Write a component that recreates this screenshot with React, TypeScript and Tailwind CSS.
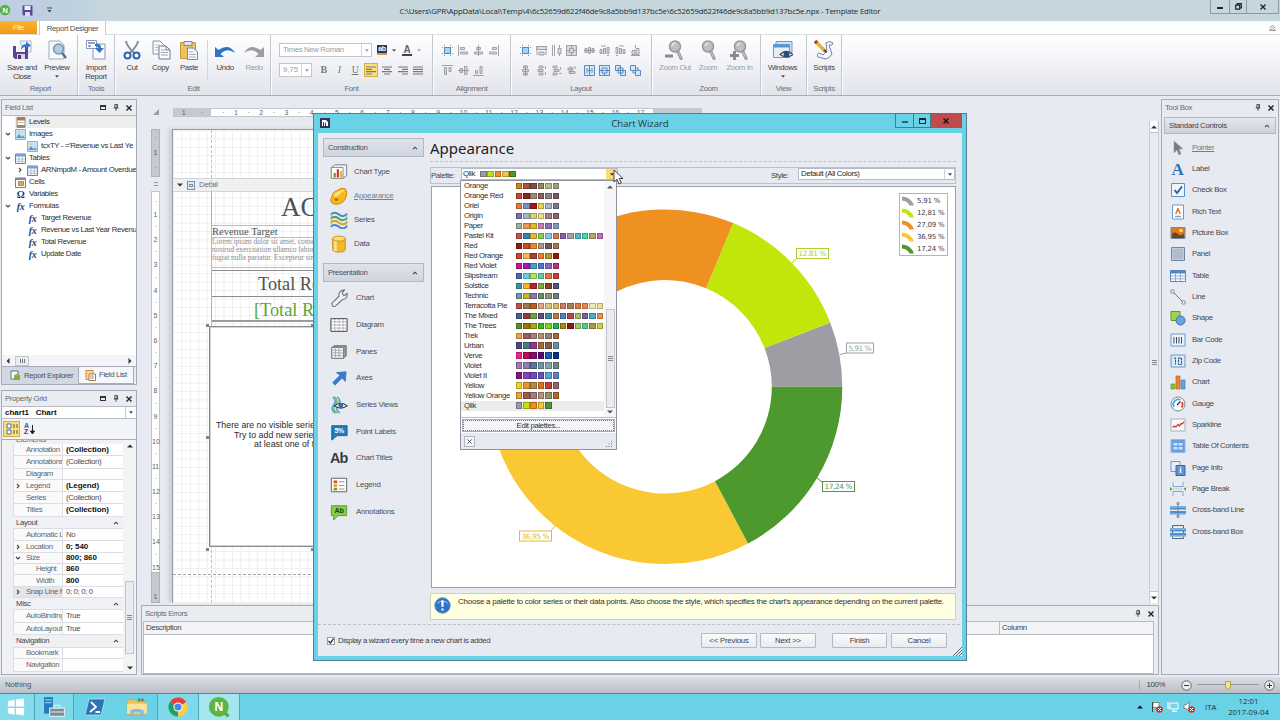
import type { ReactNode } from "react";

interface PaletteRow {
  name: string;
  colors: string[];
}

interface GridRow {
  name: string;
  value?: string;
  bold?: boolean;
  header?: boolean;
  chevron?: "right" | "down";
  indent?: boolean;
  selected?: boolean;
  height: string;
}

const palettes: PaletteRow[] = [
  { name: "Orange", colors: ["#d2821e", "#b5512f", "#7d4f4a", "#94855a", "#b7bb7c", "#95a088"] },
  { name: "Orange Red", colors: ["#cf4527", "#8f2225", "#a08a76", "#8c5f57", "#8b8489", "#7b5c60"] },
  { name: "Oriel", colors: ["#e87b3c", "#7391cd", "#a31515", "#ecd04c", "#aab3cd", "#787c8a"] },
  { name: "Origin", colors: ["#6f78a6", "#9fb6cd", "#d0d978", "#f2dc86", "#a8807f", "#84676a"] },
  { name: "Paper", colors: ["#9db095", "#e79c50", "#e3b82b", "#c77fae", "#8c6fc0", "#7f9bb8"] },
  {
    name: "Pastel Kit",
    colors: ["#ca5252", "#3784bc", "#e3b93c", "#87cf5e", "#85c8ee", "#d67b4f", "#8560b3", "#a4a5a9", "#55b7d3", "#3fdcac", "#b5a676", "#c46db9"],
  },
  { name: "Red", colors: ["#921a11", "#c74a24", "#ec882f", "#a99786", "#74595b", "#a3774f"] },
  { name: "Red Orange", colors: ["#d2432c", "#f2bb55", "#a2442d", "#ea7d3b", "#b39b20", "#9c160b"] },
  { name: "Red Violet", colors: ["#cc1690", "#ae14c1", "#45a3c1", "#4f77da", "#8366c9", "#b93574"] },
  { name: "Slipstream", colors: ["#4e65b8", "#67cde9", "#a5ee57", "#62cbab", "#ea7537", "#cf3b38"] },
  { name: "Solstice", colors: ["#4192a1", "#f4b817", "#b8212e", "#80a743", "#8b4513", "#485585"] },
  { name: "Technic", colors: ["#689dab", "#c8b530", "#8879a6", "#6f8a6d", "#8f9474", "#777a85"] },
  {
    name: "Terracotta Pie",
    colors: ["#c54f40", "#a27b4b", "#b5651b", "#e2a28d", "#cfc886", "#e2b95d", "#ce7b6a", "#ac7d53", "#d98042", "#ec8450", "#ecebb4", "#f6dc9e"],
  },
  {
    name: "The Mixed",
    colors: ["#3e6796", "#943a42", "#799c49", "#604c82", "#3a8ca4", "#bd7542", "#5182bd", "#b34a51", "#9fc168", "#7e619f", "#4eafc0", "#ee9150"],
  },
  {
    name: "The Trees",
    colors: ["#549228", "#a2700d", "#a6ad11", "#3eb420", "#74da10", "#19b457", "#a88b14", "#8b1c0b", "#98cc67", "#57cf8c", "#a99c40", "#cfd142"],
  },
  { name: "Trek", colors: ["#eaa43d", "#9f605b", "#a77d80", "#b68c72", "#91866a", "#a56b33"] },
  { name: "Urban", colors: ["#4f4c83", "#438080", "#96378f", "#b06239", "#8a5b42", "#6590a6"] },
  { name: "Verve", colors: ["#f5208b", "#c90459", "#850c76", "#5a0772", "#135bb9", "#073184"] },
  { name: "Violet", colors: ["#a976b5", "#8a81ba", "#61749b", "#7097a8", "#7fa7aa", "#718485"] },
  { name: "Violet II", colors: ["#85157b", "#8f3fbc", "#704bc0", "#6554b1", "#56a6d9", "#6181c6"] },
  { name: "Yellow", colors: ["#f6d21f", "#e99528", "#b7884c", "#db7121", "#d2382b", "#8b666b"] },
  { name: "Yellow Orange", colors: ["#e8a23a", "#a15b49", "#a67a7a", "#ba9078", "#959070", "#b36b2a"] },
  { name: "Qlik", colors: ["#9b9ca1", "#c1e40b", "#ed8f25", "#f6c640", "#4e962e"] },
];

const gridRows: GridRow[] = [
  { name: "Annotation", value: "(Collection)", bold: true, height: "h-3" },
  { name: "Annotations", value: "(Collection)", height: "h-[13px]" },
  { name: "Diagram", value: "", height: "h-[11px]" },
  { name: "Legend", value: "(Legend)", bold: true, chevron: "right", height: "h-3" },
  { name: "Series", value: "(Collection)", height: "h-3" },
  { name: "Titles", value: "(Collection)", bold: true, height: "h-[13px]" },
  { name: "Layout", header: true, height: "h-3" },
  { name: "Automatic L", value: "No", height: "h-3" },
  { name: "Location", value: "0; 540", bold: true, chevron: "right", height: "h-3" },
  { name: "Size", value: "800; 860", bold: true, chevron: "down", height: "h-[11px]" },
  { name: "Height", value: "860", bold: true, indent: true, height: "h-[11px]" },
  { name: "Width", value: "800", bold: true, indent: true, height: "h-3" },
  { name: "Snap Line M", value: "0; 0; 0; 0", chevron: "right", selected: true, height: "h-[11px]" },
  { name: "Misc", header: true, height: "h-3" },
  { name: "AutoBinding", value: "True", height: "h-[13px]" },
  { name: "AutoLayout", value: "True", height: "h-3" },
  { name: "Navigation", header: true, height: "h-[13px]" },
  { name: "Bookmark", value: "", height: "h-[11px]" },
  { name: "Navigation", value: "", height: "h-[13px]" },
];

const slices = [
  { label: "5,91 %", value: 5.91, color: "#9d9ea3" },
  { label: "12,81 %", value: 12.81, color: "#c1e60a" },
  { label: "27,09 %", value: 27.09, color: "#ee9121" },
  { label: "36,95 %", value: 36.95, color: "#fac832" },
  { label: "17,24 %", value: 17.24, color: "#4e992e" },
];

const Svg = ({ size, children, box = 20 }: { size: number; children: ReactNode; box?: number }) => (
  <svg width={size} height={size} viewBox={`0 0 ${box} ${box}`} className="shrink-0" fill="none">
    {children}
  </svg>
);

const Chevron = ({ dir }: { dir: "up" | "down" | "right" }) => (
  <svg width="6" height="6" viewBox="0 0 6 6" fill="none" stroke="#444" strokeWidth="1.1" className="shrink-0">
    {dir === "up" && <path d="M1 4.2 3 2.2 5 4.2" />}
    {dir === "down" && <path d="M1 2 3 4 5 2" />}
    {dir === "right" && <path d="M2 1 4 3 2 5" />}
  </svg>
);

const Arrow = ({ dir, color = "#333" }: { dir: "up" | "down" | "left" | "right"; color?: string }) => (
  <svg width="6" height="6" viewBox="0 0 6 6" fill={color} className="shrink-0">
    {dir === "up" && <path d="M0 4.5 3 1.5 6 4.5z" />}
    {dir === "down" && <path d="M0 1.5 3 4.5 6 1.5z" />}
    {dir === "left" && <path d="M4.5 0 1.5 3 4.5 6z" />}
    {dir === "right" && <path d="M1.5 0 4.5 3 1.5 6z" />}
  </svg>
);

const SmallArrow = ({ color }: { color: string }) => (
  <svg width="4" height="3" viewBox="0 0 4 3" fill={color} className="shrink-0">
    <path d="M0 .3h4L2 2.700z" />
  </svg>
);

const CloseX = ({ color = "#222" }: { color?: string }) => (
  <svg width="6" height="6" viewBox="0 0 6 6" stroke={color} strokeWidth="1.4" className="shrink-0">
    <path d="M.5.5 5.5 5.5M5.5.5.5 5.5" />
  </svg>
);

const Pin = () => (
  <svg width="6" height="7" viewBox="0 0 6 7" fill="none" stroke="#444" strokeWidth=".9">
    <path d="M1.8.5h2.6v3.2H1.8zM.7 4h4.6M3 4v2.8M4 .5v3.2" />
  </svg>
);

const PanelTitle = ({ title, box }: { title: string; box?: boolean }) => (
  <div className="flex h-[15px] shrink-0 items-center pl-[3px] pr-1 text-[#666b77]">
    <span className="grow">{title}</span>
    {box && <span className="mr-[7px] h-[5px] w-[6px] border border-t-2 border-[#333]" />}
    <span className="mr-[7px]"><Pin /></span>
    <CloseX />
  </div>
);

/* Ribbon */

const Floppy = () => (
  <>
    <path d="M8 1h11v11h-7z" fill="#f5f8fc" stroke="#a9b6c9" />
    <path d="M1 6h15v13H3l-2-2z" fill="#5a4495" />
    <path d="M4 6h9v6H4z" fill="#f3f1f9" />
    <path d="M5 14h8v5H5z" fill="#d9d4ea" />
    <path d="M6 15h3v4H6z" fill="#443175" />
    <path d="M9 10q0-6 5-6V1.500l5 4L14 9V6.700q-3 0-5 3.300z" fill="#3b76c8" />
  </>
);

const Pages = () => (
  <>
    <path d="M2 1h7l4 4v9H2z" fill="#f8fafd" stroke="#8391a8" />
    <path d="M4 5h5M4 7.500h5M4 10h5" stroke="#b5bdcb" />
    <path d="M8 6h7l4 4v9H8z" fill="#fafcff" stroke="#6e7d96" />
    <path d="M15 6v4h4" stroke="#6e7d96" />
    <path d="M10 10h4M10 12.500h7M10 15h7" stroke="#9aa6b9" />
  </>
);

const Lens = () => (
  <>
    <circle cx="10" cy="6.500" r="5.500" fill="#bfc0c2" stroke="#98999b" strokeWidth="1.500" />
    <path d="M7 6q1-3 3.500-3" stroke="#e5e6e7" strokeWidth="1.300" />
    <path d="m13 12 3 6.300" stroke="#97989b" strokeWidth="3.200" strokeLinecap="round" />
    <path d="m13 12 3 6" stroke="#c5c6c8" strokeWidth="1.200" />
  </>
);

const BigButton = ({ icon, label, second, width, muted, arrow }: {
  icon: ReactNode; label: string; second?: string; width: string; muted?: boolean; arrow?: boolean;
}) => (
  <div className={`flex flex-col items-center whitespace-nowrap ${width} ${muted ? "text-[#9a9da4]" : "text-[#3f4148]"}`}>
    <div className="h-[22px]"><Svg size={20}>{icon}</Svg></div>
    <span className="mt-px h-[9px] leading-[9px]">{label}</span>
    {second && <span className="leading-[9px]">{second}</span>}
    {arrow && <span className="mt-[3px]"><SmallArrow color="#555" /></span>}
  </div>
);

const Group = ({ label, width, children }: { label: string; width: string; children: ReactNode }) => (
  <div className={`flex shrink-0 flex-col border-r border-[#c3c6d0] shadow-[1px_0_0_#fdfdfe] ${width}`}>
    <div className="flex h-[49px] pt-[5px]">{children}</div>
    <div className="text-center leading-[10px] text-[#686c77]">{label}</div>
  </div>
);

const AlignLines = ({ kind }: { kind: "left" | "center" | "right" | "full" }) => (
  <svg width="10" height="9" viewBox="0 0 10 9" stroke="#77797d" strokeWidth="1.200">
    {kind === "left" && <path d="M0 1h10M0 3.300h6M0 5.600h10M0 8h6" />}
    {kind === "center" && <path d="M0 1h10M2 3.300h6M0 5.600h10M2 8h6" />}
    {kind === "right" && <path d="M0 1h10M4 3.300h6M0 5.600h10M4 8h6" />}
    {kind === "full" && <path d="M0 1h10M0 3.300h10M0 5.600h10M0 8h10" />}
  </svg>
);

// small shapes used by the Alignment and Layout groups
const small: Record<string, ReactNode> = {
  grid: (
    <g>
      <path d="M2.500 0v11M8.500 0v11M0 2.500h11M0 8.500h11" stroke="#7b8794" strokeDasharray="1 1" />
      <path d="M2.500 2.500h6v6h-6z" fill="#a9d2f2" stroke="#3e83bf" />
    </g>
  ),
  left: <path d="M.5 0v11M2.500 2.500h4v2h-4zM2.500 7h7v2h-7z" />,
  centerV: <path d="M5.500 0v11M3.500 2.500h4v2h-4zM1.500 7h8v2h-8z" />,
  right: <path d="M10.500 0v11M4.500 2.500h4v2h-4zM1.500 7h7v2h-7z" />,
  top: <path d="M0 .5h11M2.500 2.500h2v7h-2zM7 2.500h2v4H7z" />,
  middle: <path d="M0 5.500h11M2 3.500h2.500v4H2zM6.500 1.500h2.500v8H6.500z" />,
  bottom: <path d="M0 10.500h11M2.500 5.500h2v3h-2zM7 1.500h2v7H7z" />,
  width: <path d="M.5 1.500h10v3H.500zM3 7h5v3H3zM1 4v6M10 4v6" />,
  height: <path d="M1.500 0v11M3.500 0v11M7 3.500h3v5H7zM8.500 0v3M8.500 8.500V11" />,
  both: <path d="M.5.5h10v10H.500zM3.500 3.500h4v4h-4zM5.500 0v3M5.500 8v3M0 5.500h3M8 5.500h3" />,
  hEq: <path d="M1 3.500h2v4H1zM4.500 2.500h2v6h-2zM8 3.500h2v4H8zM0 5.500h11" />,
  hInc: <path d="M1 4.500h2v4H1zM4.500 3.500h2v5h-2zM8 2.500h2v6H8zM2 1h5M8 10.500h2" />,
  hDec: <path d="M1 2.500h2v6H1zM4.500 3.500h2v5h-2zM8 4.500h2v4H8zM4 1h5M1 10.500h2" />,
  hDel: <path d="M2 5.500h3v4H2zM6 3.500h3v6H6zM5.500 0v3M1 10.500h9" />,
  vEq: <path d="M3.500 1h4v2h-4zM2.500 4.500h6v2h-6zM3.500 8h4v2h-4zM5.500 0v11" />,
  vInc: <path d="M3 1h4v2H3zM2 4.500h5v2H2zM3 8h4v2H3zM9.500 1v3M9.500 7v3" />,
  vDec: <path d="M2 1h4v2H2zM3 4.500h5v2H3zM2 8h4v2H2zM9.500 2v3M8 8.500h3" />,
  vDel: <path d="M2 3h5v2H2zM3 6.500h6v2H3zM5 1v8M9 1v3" />,
};

const blueSmall: Record<string, ReactNode> = {
  centerH: <path d="M.5.500h10v10H.500zM3 3v5M8 3v5M4 5.500h3M5.500 1v9" />,
  centerW: <path d="M.5.500h10v10H.500zM3 3h5v5H3zM1 5.500h9M5.500 8v2" />,
  front: <path d="M.5.500h5v5h-5zM5.500 5.500h5v5h-5zM3 3h5v5H3z" />,
  back: <path d="M.5.500h5v5h-5zM5.500 5.500h5v5h-5zM3 6v2h2M6 3h2v2" />,
};

const SmallIcon = ({ name }: { name: string }) => (
  <div className="flex w-[15.4px] justify-center">
    <svg width="11" height="11" viewBox="0 0 11 11" fill={blueSmall[name] ? "#d6e9fa" : "#d9dadb"} stroke={blueSmall[name] ? "#4c7fb5" : "#97999d"} strokeWidth=".9">
      {small[name] ?? blueSmall[name]}
    </svg>
  </div>
);

const Ribbon = () => (
  <div className="flex h-[61px] shrink-0 border-b border-[#a9adbc] bg-linear-to-b from-white via-[#f1f2f6] to-[#e1e4eb]">
    <Group label="Report" width="w-[78px] pl-1">
      <BigButton width="w-9" label="Save and" second="Close" icon={<Floppy />} />
      <BigButton width="w-[34px]" label="Preview" arrow icon={
        <>
          <path d="M2 1h11l4 4v14H2z" fill="#f7f9fc" stroke="#a1abba" />
          <circle cx="11.500" cy="9" r="5" fill="#a9cdea" stroke="#7f93a8" strokeWidth="1.500" />
          <path d="m15 13 4 5" stroke="#596a7d" strokeWidth="2.200" />
        </>
      } />
    </Group>
    <Group label="Tools" width="w-[37px]">
      <BigButton width="w-[36px]" label="Import" second="Report" icon={
        <>
          <path d="M7 4h12v15H7z" fill="#f8fafd" stroke="#8b9ab1" />
          <path d="M.5.500h10v8H.500z" fill="#fff" stroke="#8799b6" />
          <path d="M2 3h7M2 6h3" stroke="#648ec8" strokeWidth="1.500" />
          <path d="M9 4q6-1 6 4h3l-4.500 5L9 8h3q0-2-3-2z" fill="#3673c4" />
        </>
      } />
    </Group>
    <Group label="Edit" width="w-[156px] pl-[2px]">
      <BigButton width="w-[30px]" label="Cut" icon={
        <>
          <path d="M4 1q0 4 8 12M16 1q0 4-8 12" stroke="#8390a1" strokeWidth="2" />
          <circle cx="5.500" cy="15.500" r="3" stroke="#2f65b4" strokeWidth="2" />
          <circle cx="14.500" cy="15.500" r="3" stroke="#2f65b4" strokeWidth="2" />
        </>
      } />
      <BigButton width="w-[27px]" label="Copy" icon={<Pages />} />
      <BigButton width="w-[30px]" label="Paste" icon={
        <>
          <path d="M1.500 2.500h15v16h-15z" fill="#edc263" stroke="#c7973c" />
          <path d="M5 1.500h8v4H5z" fill="#dfe6ee" stroke="#7b8898" />
          <path d="M8.500 8h6l4 4v7.500h-10z" fill="#f8fafd" stroke="#7886a0" />
          <path d="M10 12h4M10 14.500h7M10 17h7" stroke="#9faec2" />
        </>
      } />
      <span className="ml-[3px] h-10 w-px bg-[#d4d6dd]" />
      <BigButton width="ml-px w-[32px]" label="Undo" icon={
        <path d="M0 7v10h9l-3.500-3Q12 7 20 13 14 3 3.500 10z" fill="#2e71c6" />
      } />
      <BigButton width="w-[26px]" label="Redo" muted icon={
        <path d="M20 7v10h-9l3.500-3Q8 7 0 13 6 3 16.500 10z" fill="#9b9da1" />
      } />
    </Group>
    <Group label="Font" width="w-[162px]">
      <div className="flex flex-col gap-[6px] pt-[3px] pl-2 text-[#9b9da3]">
        <div className="flex h-[14px] items-center">
          <div className="flex h-full w-[93px] items-center border border-[#c3c5cd] bg-white pl-[3px]">
            <span className="grow">Times New Roman</span>
            <span className="flex h-full w-[10px] items-center justify-center border-l border-[#d5d7dd]"><SmallArrow color="#999" /></span>
          </div>
          <span className="ml-[5px] flex h-[10px] w-[10px] items-center justify-center border-b-2 border-[#d9993f] bg-[#2b3859] text-[7px] font-bold text-white">ab</span>
          <span className="ml-[5px]"><SmallArrow color="#555" /></span>
          <span className="ml-[6px] h-[11px] w-[10px] border-b-2 border-[#444] text-center text-[10px] leading-[9px] font-bold text-[#666]">A</span>
          <span className="ml-[5px]"><SmallArrow color="#aaa" /></span>
        </div>
        <div className="flex h-[14px] items-center">
          <div className="flex h-full w-[33px] items-center border border-[#c3c5cd] bg-white pl-[3px]">
            <span className="grow tracking-normal">9,75</span>
            <span className="flex h-full w-[10px] items-center justify-center border-l border-[#d5d7dd]"><SmallArrow color="#999" /></span>
          </div>
          <div className="flex w-[52px] justify-around pl-[3px] font-['Liberation_Serif',serif] text-[10px] text-[#77797e]">
            <b>B</b><i>I</i><u>U</u>
          </div>
          <div className="flex h-[14px] w-[14px] items-center justify-center border border-[#d9b13c] bg-[#fbdf7e]"><AlignLines kind="left" /></div>
          <div className="ml-[4px] flex gap-[5.5px]"><AlignLines kind="center" /><AlignLines kind="right" /><AlignLines kind="full" /></div>
        </div>
      </div>
    </Group>
    <Group label="Alignment" width="w-[78px]">
      <div className="flex flex-col gap-[9px] pt-[5px] pl-[7px]">
        <div className="flex">{["grid", "left", "centerV", "right"].map((n) => <SmallIcon key={n} name={n} />)}</div>
        <div className="flex">{["top", "middle", "bottom"].map((n) => <SmallIcon key={n} name={n} />)}</div>
      </div>
    </Group>
    <Group label="Layout" width="w-[141px]">
      <div className="flex flex-col gap-[9px] pt-[5px] pl-[7px]">
        <div className="flex">
          {["grid", "width", "height", "both"].map((n) => <SmallIcon key={n} name={n} />)}
          <span className="w-[2px]" />
          {["hEq", "hInc", "hDec", "hDel"].map((n) => <SmallIcon key={n} name={n} />)}
        </div>
        <div className="flex">
          {["vEq", "vInc", "vDec", "vDel"].map((n) => <SmallIcon key={n} name={n} />)}
          <span className="w-[2px]" />
          {["centerH", "centerW", "front", "back"].map((n) => <SmallIcon key={n} name={n} />)}
        </div>
      </div>
    </Group>
    <Group label="Zoom" width="w-[109px] pl-[5px]">
      <BigButton width="w-9" label="Zoom Out" muted icon={<><Lens /><path d="M0 16h8" stroke="#8a8c90" strokeWidth="3" /></>} />
      <BigButton width="w-[30px]" label="Zoom" muted icon={<Lens />} />
      <BigButton width="w-[33px]" label="Zoom In" muted icon={<><Lens /><path d="M0 15.500h9M4.500 11v9" stroke="#8a8c90" strokeWidth="3" /></>} />
    </Group>
    <Group label="View" width="w-[46px]">
      <BigButton width="w-[43px]" label="Windows" arrow icon={
        <>
          <path d="M3 1.500h16v11H3z" fill="#cfe2f6" stroke="#6b9bcd" />
          <path d="M.5 4.500h16v13H.500z" fill="#e4effa" stroke="#6b9bcd" />
          <path d="M.5 4.500h16v3H.500z" fill="#5b97d5" />
          <path d="M7 14.500q6-6 13 0-6 5-13 0z" fill="#fff" stroke="#4c4c50" strokeWidth="1.200" />
          <circle cx="13.500" cy="14.300" r="3" fill="#244a86" />
        </>
      } />
    </Group>
    <Group label="Scripts" width="w-[35px]">
      <BigButton width="w-[34px]" label="Scripts" icon={
        <>
          <path d="M12 3q3-3 7 0 0 3-4 2l3 9q-2 4-6 5l-8-2q-2-3 1-4l4 2 4-4z" fill="#f6f8fb" stroke="#76839a" />
          <path d="m2 2 9 9" stroke="#e0b33e" strokeWidth="3.500" />
          <path d="m1 1 2 2" stroke="#c8362b" strokeWidth="3.500" />
          <path d="m10 10 2.500 2.500" stroke="#464646" strokeWidth="2" />
        </>
      } />
    </Group>
  </div>
);

/* Left dock */

const TreeIcon = ({ kind }: { kind: string }) => {
  if (kind === "fx") {
    return <span className="w-[11px] shrink-0 text-center font-['Liberation_Serif',serif] text-[10px] leading-[11px] font-bold italic text-[#27407c]">fx</span>;
  }
  if (kind === "omega") {
    return <span className="w-[11px] shrink-0 text-center font-['Liberation_Serif',serif] text-[10px] leading-[11px] font-bold text-[#1d3778]">Ω</span>;
  }
  return (
    <Svg size={11} box={11}>
      {kind === "levels" && (
        <>
          <path d="M2 .5h8v10H2z" fill="#fff" stroke="#9c9088" />
          <path d="M2 .5h8v3H2z" fill="#a8775c" />
          <path d="M2 8h8v2.500H2z" fill="#8f8a8a" />
          <path d="M3 5.500h6" stroke="#d7b98c" />
        </>
      )}
      {kind === "image" && (
        <>
          <path d="M.5.500h10v10H.500z" fill="#c6e2f7" stroke="#87b1d6" />
          <path d="m1 9 3-4 2.500 3L8 6.500l2 2.500z" fill="#5c9acb" />
          <circle cx="4" cy="3.500" r="1.200" fill="#f3c873" />
        </>
      )}
      {kind === "table" && (
        <>
          <path d="M.5 1h10v9.500H.500z" fill="#fff" stroke="#6580ac" />
          <path d="M.5 1h10v2.500H.500z" fill="#7b9ed3" />
          <path d="M1 6h9M1 8.300h9M4 3v7M7.300 3v7" stroke="#93a8c9" strokeWidth=".7" />
        </>
      )}
      {kind === "cells" && (
        <>
          <path d="M.5 1h10v9.500H.500z" fill="#fff" stroke="#7e7e86" />
          <path d="M.5 1h10v2H.500z" fill="#808796" />
          <path d="M3.500 4.500h5v4h-5z" fill="#dfa84c" stroke="#8b6c4a" strokeWidth=".7" />
        </>
      )}
    </Svg>
  );
};

const tree = [
  { icon: "levels", label: "Levels", selected: true },
  { icon: "image", label: "Images", chevron: "down" },
  { icon: "image", label: "tcxTY - ='Revenue vs Last Ye", child: true },
  { icon: "table", label: "Tables", chevron: "down" },
  { icon: "table", label: "ARNmpdM - Amount Overdue", child: true, chevron: "right" },
  { icon: "cells", label: "Cells" },
  { icon: "omega", label: "Variables" },
  { icon: "fx", label: "Formulas", chevron: "down" },
  { icon: "fx", label: "Target Revenue", child: true },
  { icon: "fx", label: "Revenue vs Last Year Revenu", child: true },
  { icon: "fx", label: "Total Revenue", child: true },
  { icon: "fx", label: "Update Date", child: true },
];

const FieldList = () => (
  <div className="flex h-[286px] w-[136px] flex-col border border-[#a5acba] bg-[#e9ecf1]">
    <PanelTitle title="Field List" box />
    <div className="flex grow flex-col overflow-hidden border-t border-[#b6bbc6] bg-white text-[#2d2f33]">
      {tree.map((t) => (
        <div key={t.label} className={`flex h-3 shrink-0 items-center whitespace-nowrap ${t.child ? "pl-[15px]" : "pl-[3px]"}`}>
          <span className="w-[10px] shrink-0">{t.chevron && <Chevron dir={t.chevron as "down" | "right"} />}</span>
          <span className={`flex h-full grow items-center gap-[3px] ${t.selected ? "bg-[#eeeeef]" : ""}`}>
            <TreeIcon kind={t.icon} />
            {t.label}
          </span>
        </div>
      ))}
      <div className="mt-auto flex h-[11px] items-center gap-1 bg-[#f5f5f7] px-[3px]">
        <Arrow dir="left" />
        <span className="flex h-[10px] w-[14px] items-center justify-center gap-px border border-[#c6c8d0] bg-[#ebecf1]">
          <i className="h-1 w-px bg-[#777]" /><i className="h-1 w-px bg-[#777]" /><i className="h-1 w-px bg-[#777]" />
        </span>
        <span className="grow" />
        <Arrow dir="right" />
      </div>
    </div>
    <div className="flex h-[18px] shrink-0 border-t border-[#a5acba] whitespace-nowrap text-[#4c5059]">
      <div className="flex w-[77px] items-center gap-[3px] border-r border-[#a5acba] bg-[#d2d8e2] pl-2">
        <Svg size={11} box={11}>
          <path d="M1 1h7v8H1z" fill="#fff" stroke="#55749c" />
          <path d="M4 5h6v5H4z" fill="#7fb143" />
          <path d="M5.500 3.500h2v2h-2z" fill="#e1a637" />
        </Svg>
        Report Explorer
      </div>
      <div className="flex w-[55px] items-center gap-[3px] border-r border-b border-[#a5acba] bg-[#f5f7fa] pl-[6px]">
        <Svg size={11} box={11}>
          <path d="M1 .5h7v9H1z" fill="#f8d98f" stroke="#cc8a3a" />
          <path d="M4 4h6.500v6.500H4z" fill="#fff" stroke="#c17635" />
          <path d="M5 6h4M5 8h4" stroke="#789bc8" />
        </Svg>
        Field List
      </div>
    </div>
  </div>
);

const PropertyGrid = () => (
  <div className="flex h-[285px] w-[136px] flex-col border border-[#a5acba] bg-[#e9ecf1]">
    <PanelTitle title="Property Grid" box />
    <div className="flex h-[13px] shrink-0 items-center border-y border-[#b6bbc6] bg-white pl-[3px] text-[8px] font-bold tracking-normal text-[#111]">
      <span className="grow whitespace-pre">chart1   Chart</span>
      <span className="flex h-full w-[11px] items-center justify-center border-l border-[#c6c9d1]"><SmallArrow color="#444" /></span>
    </div>
    <div className="flex h-5 shrink-0 items-center gap-1 bg-[#f3f4f7] px-px">
      <span className="flex h-4 w-[17px] items-center justify-center border border-[#d7ab3c] bg-[#fbdf7c]">
        <Svg size={12} box={12}>
          <path d="M1 1h4v4H1zM1 7h4v4H1z" fill="#fff" stroke="#4372ae" />
          <path d="M7 2h2M7 4h2M7 8h2M7 10h2M10 2h2M10 4h2M10 8h2M10 10h2" stroke="#5a5a5a" />
        </Svg>
      </span>
      <span className="flex flex-col text-[7px] leading-[6px] font-bold"><i className="not-italic text-[#2c62ac]">A</i><i className="not-italic text-[#a32626]">Z</i></span>
      <svg width="5" height="11" viewBox="0 0 5 11" className="-ml-[3px]"><path d="M2.500 1v8M.5 7l2 3 2-3z" stroke="#222" fill="#222" /></svg>
    </div>
    <div className="flex grow overflow-hidden border-t border-[#a5acba]">
      <div className="flex w-[121px] flex-col bg-[#f0f1f4] pl-[11px] text-[#63666e]">
        <div className="h-1 shrink-0 overflow-hidden pl-[3px] leading-[0px]">Elements</div>
        {gridRows.map((r, i) =>
          r.header ? (
            <div key={i} className={`flex shrink-0 items-center border-b border-[#dcdee4] pl-[3px] pr-[4px] text-[#44474f] ${r.height}`}>
              <span className="grow">{r.name}</span>
              <Chevron dir="up" />
            </div>
          ) : (
            <div key={i} className={`flex shrink-0 border-b border-[#dcdee4] whitespace-nowrap ${r.height} ${r.selected ? "bg-[#e4e5e8]" : "bg-[#fafafb]"}`}>
              <div className="flex w-[50px] items-center overflow-hidden border-x border-[#dcdee4]">
                <span className="w-[12px] shrink-0 pl-px">{r.chevron && <Chevron dir={r.chevron} />}</span>
                <span className={r.indent ? "pl-[10px]" : ""}>{r.name}</span>
              </div>
              <div className={`flex grow items-center bg-white pl-[3px] ${r.bold ? "text-[8px] font-bold tracking-[-0.1px] text-[#111]" : "text-[#4a4c52]"}`}>{r.value}</div>
            </div>
          )
        )}
      </div>
      <div className="flex w-[13px] flex-col items-center bg-[#f3f3f5] py-[3px]">
        <Arrow dir="up" />
        <span className="grow" />
        <span className="mb-[11px] flex h-[73px] w-[9px] flex-col items-center justify-center gap-px border border-[#c2c4cb] bg-[#ececf0]">
          <i className="h-px w-[5px] bg-[#888]" /><i className="h-px w-[5px] bg-[#888]" /><i className="h-px w-[5px] bg-[#888]" />
        </span>
        <Arrow dir="down" />
      </div>
    </div>
  </div>
);

/* Design surface */

const Handle = ({ at }: { at: string }) => <i className={`absolute h-[3px] w-[3px] bg-[#7685a3] ${at}`} />;

const Ruler = () => (
  <div className="flex h-[9px] w-[529px] overflow-hidden border border-[#c2c6ce] bg-white text-center text-[7px] leading-[8px] tracking-normal text-[#5f6268]">
    <div className="flex w-[37px] shrink-0 justify-around bg-[#c4c9d2]"><span>1</span><span>·</span></div>
    <div className="flex shrink-0 pl-[12.2px]">
      {Array.from({ length: 17 }, (_, i) => (
        <span key={i} className="relative w-[25.3px] shrink-0">{i + 1}<i className="absolute top-0 -left-px not-italic">·</i></span>
      ))}
    </div>
    <div className="grow bg-[#c4c9d2]" />
  </div>
);

const VRuler = () => (
  <div className="flex w-[9px] flex-col items-center text-[7px] leading-[8px] tracking-normal text-[#5f6268]">
    <div className="flex h-12 w-full shrink-0 flex-col items-center justify-around border border-[#adb3bf] bg-[#c4c9d2] text-center"><span>·</span><span>1</span><span>·</span></div>
    <span className="my-[5px] h-1 w-1 shrink-0 border-y border-[#999]" />
    <div className="h-[381px] w-full shrink-0 border border-b-0 border-[#c2c6ce] bg-white pt-[10px] text-center">
      {Array.from({ length: 15 }, (_, i) => (
        <div key={i} className="relative h-[25.2px] pt-[9px]"><i className="absolute top-[-4px] left-[3px] not-italic">·</i>{i + 1}</div>
      ))}
    </div>
    <div className="w-full grow border border-[#adb3bf] bg-[#c4c9d2] pt-5 text-center">1</div>
  </div>
);

const Surface = () => (
  <div className="flex h-[507px] shrink-0 bg-[#e7eaf0]">
    <div className="relative flex grow flex-col overflow-hidden">
      <div className="mt-[12px] flex pl-[12px]">
        <svg width="8" height="8" viewBox="0 0 8 8" className="mr-[13px]"><path d="M7 1v6H1z" fill="#999da5" /></svg>
        <Ruler />
      </div>
      <div className="mt-[12px] flex grow pl-[11px]">
        <VRuler />
        <div className="relative ml-[12px] w-[529px] border-t border-l border-[#9a9da5] bg-white bg-[linear-gradient(#eeeeef_1px,transparent_1px),linear-gradient(90deg,#eeeeef_1px,transparent_1px)] bg-[size:8.43px_8.43px] font-['Liberation_Serif',serif] tracking-normal shadow-[-3px_0_4px_#c9ccd3]">
          <div className="mt-[48px] flex h-[14px] items-center gap-1 border-y border-[#d2d3d6] bg-[#f0f0f1] pl-1 font-['Liberation_Sans',sans-serif] tracking-[-0.2px] text-[#6b6e75]">
            <Arrow dir="down" />
            <span className="flex h-[9px] w-[8px] items-center justify-center border border-[#7492b2] bg-[#dce8f3]"><i className="h-[3px] w-[4px] border border-[#7492b2]" /></span>
            Detail
          </div>
          <i className="absolute top-0 left-[38px] h-full border-l border-dashed border-[#c2c2c4]" />
          <i className="absolute top-[444px] left-0 w-full border-t border-dashed border-[#a6a6a8]" />
          <div className="absolute top-[62px] left-[38px] h-[134px] w-[453px] border-l border-[#b5b5b8] text-[#505154]">
            <div className="h-[34px] border-b border-[#bdbdc0] pl-[69px] text-[27px] leading-[31px]">ACME</div>
            <div className="h-3 border-b border-[#bdbdc0] text-[10.5px] leading-[12px] whitespace-nowrap">Revenue Target</div>
            <div className="h-[30px] w-[280px] border-b border-[#bdbdc0] text-[7.4px] leading-[8px] whitespace-nowrap text-[#8e8f92]">
              <div>Lorem ipsum dolor sit amet, consectetur adipiscing elit</div>
              <div>nostrud exercitation ullamco laboris nisi ut aliquip ex</div>
              <div>fugiat nulla pariatur. Excepteur sint occaecat cupidatat</div>
            </div>
            <div className="mt-[2px] h-[27px] border-y border-[#8b8b8e] pl-[46px] text-[18.3px] leading-[26px] whitespace-nowrap">Total Revenue</div>
            <div className="h-[25px] border-b-2 border-[#9b9b9e] pl-[42px] text-[18.3px] leading-[26px] whitespace-nowrap text-[#5da53a]">[Total Revenue]</div>
          </div>
          <div className="absolute top-[196px] left-[36px] h-[221px] w-[455px] border border-[#8b8b8f] bg-white pt-[94px] pl-[6px] font-['Liberation_Sans',sans-serif] text-[8.8px] leading-[9.7px] whitespace-nowrap text-[#2a2a2c] shadow-[inset_0_0_0_1px_#d4d4d7]">
            <div>There are no visible series in the chart.</div>
            <div className="pl-[18px]">Try to add new series or make</div>
            <div className="pl-[38px]">at least one of them visible.</div>
          </div>
          <Handle at="top-[194px] left-[33px]" />
          <Handle at="top-[194px] left-[138px]" />
          <Handle at="top-[306px] left-[33px]" />
          <Handle at="top-[418px] left-[33px]" />
          <Handle at="top-[418px] left-[138px]" />
        </div>
      </div>
    </div>
    <div className="mt-[25px] flex w-[10px] flex-col items-center border-x border-[#c9ccd3] bg-[#f1f2f5]">
      <span className="flex h-[11px] items-center bg-white"><Arrow dir="up" /></span>
      <span className="flex w-full grow flex-col items-center justify-center gap-px border-y border-[#c2c4cb] bg-[#e9ebf0]">
        <i className="h-px w-[5px] bg-[#888]" /><i className="h-px w-[5px] bg-[#888]" /><i className="h-px w-[5px] bg-[#888]" />
      </span>
      <span className="flex h-[11px] items-center bg-white"><Arrow dir="down" /></span>
    </div>
  </div>
);

const ScriptErrors = () => (
  <div className="ml-px flex h-[70px] w-[1018px] flex-col border border-[#a5acba] bg-[#e9ecf1]">
    <PanelTitle title="Scripts Errors" />
    <div className="ml-px mr-1 flex h-[14px] shrink-0 items-center border border-[#b6bbc6] bg-[#f1f3f7] text-[#3e4149]">
      <span className="w-[855px] pl-[2px]">Description</span>
      <span className="flex h-full items-center border-l border-[#b6bbc6] pl-[2px]">Column</span>
    </div>
    <div className="mr-1 ml-px grow border-x border-b border-[#b6bbc6] bg-white" />
  </div>
);

/* Toolbox */

const tools: { label: string; icon: ReactNode }[] = [
  { label: "Pointer", icon: <path d="M4 1v12l3-3 2 5 2-1-2-5h4z" fill="#77797c" stroke="#a5a6a8" strokeWidth=".6" /> },
  { label: "Label", icon: <text x="1.500" y="14" fontSize="17" fontWeight="bold" fontFamily="Liberation Serif, serif" fill="#3274b8">A</text> },
  { label: "Check Box", icon: <><path d="M1.500 1.500h13v13h-13z" fill="#eef6fd" stroke="#5d90c3" /><path d="m4.500 8 2.500 3 5-6.500" stroke="#2b5c9c" strokeWidth="1.800" /></> },
  { label: "Rich Text", icon: <><path d="M2.500 1h11v14h-11z" fill="#fff" stroke="#6a9ac8" /><path d="m5 10 2.500-6h1L11 10H9.500L8 6.500 6.500 10z" fill="#d8692d" /><path d="M5 12.500h6" stroke="#8b9cb0" strokeWidth="1.500" /></> },
  { label: "Picture Box", icon: <><path d="M1 2.500h14v11H1z" fill="#d77c20" stroke="#688ab0" /><path d="M2 9q3-3 6 0t6-1v5H2z" fill="#7c3f16" /><circle cx="11" cy="5.500" r="1.800" fill="#f9d860" /></> },
  { label: "Panel", icon: <><path d="M1.500 1.500h13v13h-13z" fill="#c3ced9" stroke="#71869e" /><path d="M3 3h10v10H3z" fill="#aebdcb" /></> },
  { label: "Table", icon: <><path d="M.5 2.500h15v11H.500z" fill="#fff" stroke="#5f87b5" /><path d="M.5 2.500h15v3H.500z" fill="#4e87cb" /><path d="M1 8h14M1 10.800h14M5.500 5v8M10.500 5v8" stroke="#83a3c9" strokeWidth=".9" /></> },
  { label: "Line", icon: <><path d="m3 3 10 10" stroke="#777" /><path d="M1 1h3v3H1zM12 12h3v3h-3z" fill="#fff" stroke="#777" strokeWidth=".8" /></> },
  { label: "Shape", icon: <><path d="M1 1.500h9v9H1z" fill="#9ed54c" stroke="#5d9828" /><circle cx="10.500" cy="10.500" r="4.500" fill="#6ea1da" stroke="#3b6fae" /></> },
  { label: "Bar Code", icon: <><path d="M1 2h14v12H1z" fill="#eaf3fb" stroke="#6b9aca" /><path d="M4 5v6.500M6.500 5v6.500M9 5v6.500M11.500 5v6.500" stroke="#3e4f66" /></> },
  { label: "Zip Code", icon: <><path d="M1 2h14v12H1z" fill="#d8e9f8" stroke="#6b9aca" /><path d="M4 5h1.500v6.500M8.500 5h3v6.500h-3z" stroke="#35577f" strokeDasharray="2.500 .5" /></> },
  { label: "Chart", icon: <><path d="M1 10h4v5H1z" fill="#86c63e" stroke="#4e9122" strokeWidth=".6" /><path d="M6 2h4v13H6z" fill="#ec8333" stroke="#bb571b" strokeWidth=".6" /><path d="M11 6h4v9h-4z" fill="#6aa2e0" stroke="#3a6daa" strokeWidth=".6" /></> },
  { label: "Gauge", icon: <><circle cx="8" cy="8" r="7" fill="#fff" stroke="#7d8590" /><path d="M4 11a5 5 0 0 1 6.500-7" stroke="#45a5e4" strokeWidth="1.800" /><path d="M12 6q1.500 3-.5 5.500" stroke="#d64337" strokeWidth="1.800" /><path d="m7 9 3.500-3.500" stroke="#333" strokeWidth="1.300" /></> },
  { label: "Sparkline", icon: <><path d="M1 2h14v12H1z" fill="#fbfbfc" stroke="#a9aeb6" /><path d="m2.500 10.500 2-1.500 1.500 1L8 7.500 9.500 9 11 6.500l1 .5 2-2" stroke="#c9352f" strokeWidth="1.200" /></> },
  { label: "Table Of Contents", icon: <><path d="M1 1.500h14v13H1z" fill="#6aa0de" stroke="#8fb9e8" /><path d="M3.500 5h4v2.500h-4zM8.500 5h4v2.500h-4zM3.500 9h4v2.500h-4zM8.500 9h4v2.500h-4z" fill="#cfe3f8" /></> },
  { label: "Page Info", icon: <><path d="M1 1.500h9v10H1z" fill="#e8f1fa" stroke="#6d96c4" /><path d="M6 5.500h9v10H6z" fill="#5d94d6" stroke="#3567a5" /><path d="M10.500 8.500V13M10.500 6.500v1" stroke="#fff" strokeWidth="1.500" /></> },
  { label: "Page Break", icon: <><path d="M3 1v4.500h10V1M3 15v-4.500h10V15" fill="#e5eff9" stroke="#84a6ca" /><path d="M3 8h10" stroke="#a8bdd5" strokeDasharray="1.500 1" /><path d="m0 6 2.500 2L0 10zM16 6l-2.500 2 2.500 2z" fill="#52a83b" /></> },
  { label: "Cross-band Line", icon: <><path d="M0 4h16v3.500H0zM0 9h16v3.500H0z" fill="#4c8fd3" /><path d="M0 5h16M0 12h16" stroke="#a8ccef" /><path d="M8 1v14M7 .5h2v2H7zM7 13.500h2v2H7z" stroke="#666" strokeWidth=".6" /></> },
  { label: "Cross-band Box", icon: <><path d="M2.500 1.500h11v13h-11z" stroke="#4f6784" /><path d="M0 4h16v3.500H0zM0 9h16v3.500H0z" fill="#4c8fd3" /><path d="M0 5h16M0 12h16" stroke="#a8ccef" /></> },
];

const ToolBox = () => (
  <div className="mt-[3px] flex h-[576px] w-[118px] flex-col border border-[#a5acba] bg-[#e7eaf0]">
    <PanelTitle title="Tool Box" />
    <div className="mx-[2px] mt-[2px] flex h-[17px] items-center border border-[#b2b8c4] bg-linear-to-b from-[#e3e7ee] to-[#cdd3de] pr-[5px] pl-1 text-[#3f434b]">
      <span className="grow tracking-[-0.3px]">Standard Controls</span>
      <Chevron dir="up" />
    </div>
    <div className="mt-[3px] flex flex-col">
      {tools.map((t) => (
        <div key={t.label} className="flex h-[21.33px] items-center gap-[6px] pl-2 text-[#45494f]">
          <Svg size={16} box={16}>{t.icon}</Svg>
          <span className={t.label === "Pointer" ? "text-[#777a80] underline" : ""}>{t.label}</span>
        </div>
      ))}
    </div>
  </div>
);

/* Chart Wizard */

const CX = 665;
const CY = 386.8;

const point = (deg: number, r: number) => {
  const a = (deg * Math.PI) / 180;
  return `${(CX + r * Math.cos(a)).toFixed(2)} ${(CY - r * Math.sin(a)).toFixed(2)}`;
};

const arcPath = (from: number, to: number) =>
  `M${point(from, 177.3)}A177.3 177.3 0 0 0 ${point(to, 177.3)}L${point(to, 106.8)}A106.8 106.8 0 0 1 ${point(from, 106.8)}z`;

const callouts = [
  { text: "12,81 %", x: 796.5, y: 248.5, w: 32, color: "#b3cc2e", line: "M792 263 797 258" },
  { text: "5,91 %", x: 846.5, y: 343, w: 27, color: "#9d9ea3", line: "M840 354.500 846 353" },
  { text: "17,24 %", x: 822.5, y: 481.5, w: 32, color: "#5c8f4a", line: "M817 478 822 482" },
  { text: "36,95 %", x: 519.5, y: 531, w: 32, color: "#dcbb45", line: "M556 525 551 531" },
];

const Donut = () => {
  let angle = 0;
  return (
    <svg width="522" height="399" viewBox="432 187 522 399" className="tracking-normal">
      {slices.map((s) => {
        const from = angle;
        angle += s.value * 3.6;
        return <path key={s.label} d={arcPath(from, angle)} fill={s.color} />;
      })}
      {callouts.map((c) => (
        <g key={c.text}>
          <path d={c.line} stroke={c.color} />
          <rect x={c.x} y={c.y} width={c.w} height="10" fill="#fff" stroke={c.color} />
          <text x={c.x + 2} y={c.y + 7.8} fontSize="7.3" textLength={c.w - 4} fontFamily="DejaVu Sans, sans-serif" fill={c.color}>{c.text}</text>
        </g>
      ))}
    </svg>
  );
};

const Swatches = ({ colors }: { colors: string[] }) => (
  <span className="flex gap-[0.85px]">
    {colors.map((c, i) => (
      <i key={i} className="h-[6.5px] w-[6.5px] border border-black/25" style={{ backgroundColor: c }} />
    ))}
  </span>
);

const NavHeader = ({ label }: { label: string }) => (
  <div className="flex h-[19px] w-[101px] shrink-0 items-center border border-[#b2b8c4] bg-linear-to-b from-[#dfe3ea] to-[#cfd5df] pr-[5px] pl-1 text-[#4c5059]">
    <span className="grow">{label}</span>
    <Chevron dir="up" />
  </div>
);

const NavItem = ({ label, icon, className, active }: { label: string; icon: ReactNode; className: string; active?: boolean }) => (
  <div className={`flex shrink-0 items-center pl-[7px] text-[#4b4e56] ${className}`}>
    <Svg size={18}>{icon}</Svg>
    <span className={active ? "tracking-[-0.25px] text-[#777b84] underline" : "tracking-[-0.25px]"}>{label}</span>
  </div>
);

const construction: { label: string; icon: ReactNode }[] = [
  { label: "Chart Type", icon: <><path d="m1.500 5 4-3h13v12l-4 3h-13z" fill="#f1f1f2" stroke="#777" /><path d="M1.500 5h13v12h-13z" fill="#fff" stroke="#888" /><path d="M4 11h2.500v5H4z" fill="#54a136" /><path d="M7.500 7H10v9H7.500z" fill="#cd3b2c" /><path d="M11 9h2.500v7H11z" fill="#e1b12e" /></> },
  { label: "Appearance", icon: <><path d="M2 11Q3 5 8 4q4-4 9-2 3 4 1 8-1 7-9 9-6 1-8-3-1-2 1-5z" fill="#f6b81e" stroke="#c98209" /><path d="M4 9Q6 6 9 5q5-3 8-1-5 2-7 5-4 4-6 0z" fill="#fce273" /><ellipse cx="7" cy="14" rx="2.500" ry="1.500" fill="#b86f0a" /></> },
  { label: "Series", icon: <><path d="M1 4q4-4 9 0t9-1" stroke="#4289d0" strokeWidth="2.200" /><path d="M1 8.500q4-4 9 0t9-1" stroke="#58a544" strokeWidth="2.200" /><path d="M1 13q4-4 9 0t9-1" stroke="#d8a134" strokeWidth="2.200" /><path d="M1 17.500q4-4 9 0t9-1" stroke="#4289d0" strokeWidth="2" /><path d="M1.500 4v13M18.500 3v13" stroke="#7fa98d" strokeWidth=".7" /></> },
  { label: "Data", icon: <><path d="M3 4v12q0 3 7 3t7-3V4z" fill="#f1b92b" stroke="#ca8d15" /><path d="M6 6v12" stroke="#fde287" strokeWidth="3" /><ellipse cx="10" cy="4" rx="7" ry="2.800" fill="#fbdc76" stroke="#ca8d15" /></> },
];

const presentation: { label: string; icon: ReactNode }[] = [
  { label: "Chart", icon: <path d="m2 16 8-8q-1-6 6-7l-2.500 4 2 2.500L19 5q1 6-5.500 7L6 19q-3 2-4-3z" fill="#f0f1f2" stroke="#6e7278" strokeWidth="1.200" /> },
  { label: "Diagram", icon: <><path d="M1 3h18v14H1z" fill="#fff" stroke="#333" /><path d="M1 6.500h18M1 10h18M1 13.500h18M5.500 3v14M10 3v14M14.500 3v14" stroke="#777" strokeWidth=".8" strokeDasharray="2 1" /></> },
  { label: "Panes", icon: <><path d="m2 5 3-2h13v11l-3 3H2z" fill="#98999c" stroke="#666" /><path d="M2 5h13v12H2z" fill="#f5f5f6" stroke="#777" /><path d="M3 8h11M3 11h11M3 14h11M6 6v10M10 6v10" stroke="#8f8f92" strokeWidth=".8" /></> },
  { label: "Axes", icon: <path d="m3 15 8-8-4-3 11-1-1 11-3.500-4-8 8z" fill="#367ccd" stroke="#2460a6" strokeWidth=".6" /> },
  { label: "Series Views", icon: <><path d="M3 1q5 4 1 9t2 9M8 1q5 4 1 9t2 9" stroke="#59a3d9" strokeWidth="2" /><path d="M5 1q5 4 1 9t2 9" stroke="#7fb955" strokeWidth="1.600" /><path d="M5 11q7-6 14 0-7 5-14 0z" fill="#fff" stroke="#333" strokeWidth="1.200" /><circle cx="12" cy="10.500" r="2.700" fill="#2c7799" /></> },
  { label: "Point Labels", icon: <><path d="M2 3h17v11H8l-6 5z" fill="#217dbb" stroke="#115b8e" /><text x="5" y="11" fontSize="7.500" fontWeight="bold" fontFamily="Liberation Sans, sans-serif" fill="#fff">5%</text></> },
  { label: "Chart Titles", icon: <text x="0" y="16" fontSize="16" fontWeight="bold" textLength="20" fontFamily="Liberation Sans, sans-serif" fill="#3a3b3d">Ab</text> },
  { label: "Legend", icon: <><path d="M1.500 2.500h17v15h-17z" fill="#fff" stroke="#555" /><path d="M4 5h4v3H4z" fill="#d84b35" /><path d="M4 9h4v3H4z" fill="#e0a737" /><path d="M4 13h4v3H4z" fill="#5fa63c" /><path d="M10 6.500h6M10 10.500h6M10 14.500h6" stroke="#888" /></> },
  { label: "Annotations", icon: <><path d="M1.500 3h17v11H9l-5 5v-5H1.500z" fill="#85cd49" stroke="#539e28" /><text x="5" y="11" fontSize="8" fontWeight="bold" fontFamily="Liberation Sans, sans-serif" fill="#234512">Ab</text></> },
];

const WizardButton = ({ label, className }: { label: string; className: string }) => (
  <div className={`flex h-[15px] items-center justify-center rounded-[1px] border border-[#b5b9c4] bg-linear-to-b from-[#fbfbfd] to-[#e9ebf0] tracking-[-0.2px] text-[#3d4048] ${className}`}>{label}</div>
);

const PaletteDropDown = () => (
  <div className="flex h-[270px] w-[157px] flex-col border border-[#8e939e] bg-white text-[#2e3035]">
    <div className="flex h-[237px] shrink-0 border-b border-[#b9bcc5]">
      <div className="w-[143px]">
        {palettes.map((p) => (
          <div key={p.name} className={`flex h-[9.99px] items-center pl-[3px] ${p.name === "Qlik" ? "bg-[#ebecee]" : ""}`}>
            <span className="w-[51.8px] shrink-0 whitespace-nowrap">{p.name}</span>
            <Swatches colors={p.colors} />
          </div>
        ))}
      </div>
      <div className="flex grow flex-col items-center bg-[#f6f6f8] pt-[3px] pb-[2px]">
        <Arrow dir="up" color="#555" />
        <span className="grow" />
        <span className="mb-[1px] flex h-[99px] w-[9px] flex-col items-center justify-center gap-px border border-[#c2c4cb] bg-[#ececf0]">
          <i className="h-px w-[5px] bg-[#888]" /><i className="h-px w-[5px] bg-[#888]" /><i className="h-px w-[5px] bg-[#888]" />
        </span>
        <Arrow dir="down" color="#555" />
      </div>
    </div>
    <div className="mx-px mt-px flex h-[13px] items-center justify-center border border-[#a9adb8] bg-[#f4f5f8] outline-1 -outline-offset-2 outline-dotted outline-[#777]">Edit palettes...</div>
    <div className="mt-px flex grow items-center justify-between bg-[#e7eaf0] px-[3px]">
      <span className="flex h-[11px] w-[11px] items-center justify-center border border-[#b3b7c1] bg-[#f3f4f7]">
        <svg width="5" height="5" viewBox="0 0 5 5" stroke="#555"><path d="M.5.500l4 4M4.500.500l-4 4" /></svg>
      </span>
      <svg width="7" height="7" viewBox="0 0 7 7" className="mt-[6px]" fill="#777"><path d="M5 0h1v1H5zM5 2.500h1v1H5zM5 5h1v1H5zM2.500 2.500h1v1h-1zM2.500 5h1v1h-1zM0 5h1v1H0z" /></svg>
    </div>
  </div>
);

const Wizard = () => (
  <div className="absolute top-[113px] left-[313px] flex h-[548px] w-[654px] flex-col border border-[#55808e] bg-[#6ad2e7] px-1 pb-1">
    <div className="relative flex h-[19px] shrink-0 items-center justify-center font-['Open_Sans',sans-serif] text-[9.7px] tracking-[-0.1px] text-[#27383d]">
      <span className="absolute top-[4px] left-[2px] flex h-[10px] w-[10px] items-center justify-center bg-[#2e3357]">
        <svg width="8" height="8" viewBox="0 0 8 8" fill="#fff"><path d="M1 1h4l2 2v4H5V4H4v3H3V3H2v4H1z" /></svg>
      </span>
      <span>Chart Wizard</span>
      <div className="absolute -top-px right-0 flex h-[15px] border border-[#3e7f8e]">
        <span className="flex w-[18px] items-center justify-center border-r border-[#3e7f8e]"><i className="mt-[3px] h-[2px] w-[6px] bg-[#2f6371]" /></span>
        <span className="flex w-[17px] items-center justify-center border-r border-[#3e7f8e]"><i className="h-[6px] w-[7px] border border-t-2 border-[#222]" /></span>
        <span className="flex w-[30px] items-center justify-center bg-[#c04b4e]"><CloseX color="#1c1011" /></span>
      </div>
    </div>
    <div className="relative flex grow flex-col bg-[#e7eaf0]">
      <div className="flex h-[491px]">
        <div className="flex w-[112px] flex-col pt-[5px] pl-[5px]">
          <NavHeader label="Construction" />
          <div className="mt-[3px] mb-[7px]">
            {construction.map((n) => (
              <NavItem key={n.label} label={n.label} icon={n.icon} active={n.label === "Appearance"} className="h-6 gap-[6px]" />
            ))}
          </div>
          <NavHeader label="Presentation" />
          <div className="mt-[3px]">
            {presentation.map((n) => (
              <NavItem key={n.label} label={n.label} icon={n.icon} className="h-[26.7px] gap-[8px]" />
            ))}
          </div>
        </div>
        <div className="flex w-[526px] flex-col">
          <div className="h-[29px] border-b border-dashed border-[#bcc0c9] font-['Noto_Sans',sans-serif] text-[15px] leading-[30px] tracking-normal text-[#1f2124]">Appearance</div>
          <div className="mt-[5px] flex h-[17px] items-center border border-[#bcc1cb] text-[#3f424a]">
            <span className="w-[30px]">Palette:</span>
            <div className="flex h-3 w-[157px] items-center self-start border border-[#b7bbc5] bg-white pl-px">
              <span className="w-[17px] text-[#26282c]">Qlik</span>
              <span className="grow"><Swatches colors={["#9b9ca1", "#c1e40b", "#ed8f25", "#f6c640", "#4e962e"]} /></span>
              <span className="flex h-full w-[11px] items-center justify-center bg-[#fbdb75]"><SmallArrow color="#333" /></span>
            </div>
            <span className="grow" />
            <span className="w-[27px]">Style:</span>
            <div className="flex h-3 w-[157px] items-center self-start border border-[#b7bbc5] bg-white pl-[2px] text-[#26282c]">
              <span className="grow">Default (All Colors)</span>
              <span className="flex h-full w-[10px] items-center justify-center border-l border-[#cfd2d9]"><SmallArrow color="#444" /></span>
            </div>
          </div>
          <div className="relative mt-[2px] ml-px h-[402px] w-[525px] border border-[#9aa0ac] bg-white">
            <Donut />
            <div className="absolute top-[6px] right-[7px] flex h-[63px] w-[49px] flex-col border border-[#b5b5b8] bg-white pt-px pl-[2px] font-['DejaVu_Sans',sans-serif] text-[7px] text-[#3a3a3c]">
              {slices.map((s) => (
                <div key={s.label} className="flex h-3 items-center gap-[3px] whitespace-nowrap tracking-[-0.2px]">
                  <svg width="12" height="10" viewBox="0 0 12 10" className="shrink-0"><path d="M0 .5Q9 1 12 9.500H7.500Q5.500 5 0 4.500z" fill={s.color} /></svg>
                  {s.label}
                </div>
              ))}
            </div>
          </div>
          <div className="mt-[5px] flex h-[27px] gap-[7px] border border-[#cdcfbf] bg-[#ffffe1] pl-[3px] text-[#2f3033]">
            <span className="mt-[3px]">
              <Svg size={17}>
                <circle cx="10" cy="10" r="9.300" fill="#2f73c9" stroke="#9dadc1" />
                <path d="M4 7.500q6-6 12 0" stroke="#8dbcf0" strokeWidth="1.500" />
                <path d="M10 4v7.500M10 13.500v2.500" stroke="#fff" strokeWidth="2.600" />
              </Svg>
            </span>
            <span className="mt-[2px] text-[8px] leading-[11px] tracking-[-0.24px] whitespace-nowrap">Choose a palette to color series or their data points. Also choose the style, which specifies the chart's appearance depending on the current palette.</span>
          </div>
        </div>
      </div>
      <div className="mr-[2px] flex grow items-center border-t border-dashed border-[#bcc0c9] pl-[9px] text-[#3d4048]">
        <span className="mr-[3px] flex h-[8px] w-[8px] items-center justify-center border border-[#999ea9] bg-white">
          <svg width="6" height="6" viewBox="0 0 6 6" fill="none" stroke="#222" strokeWidth="1.300"><path d="m.5 3 2 2 3-4.500" /></svg>
        </span>
        <span className="w-[363px]">Display a wizard every time a new chart is added</span>
        <WizardButton label="<< Previous" className="w-14" />
        <WizardButton label="Next >>" className="ml-[3px] w-14" />
        <WizardButton label="Finish" className="ml-4 w-[55px]" />
        <WizardButton label="Cancel" className="ml-1 w-14" />
      </div>
      <svg width="9" height="9" viewBox="0 0 9 9" className="absolute right-0 bottom-0" stroke="#555" strokeWidth=".9"><path d="M0 9 9 0M3 9 9 3M6 9 9 6" /></svg>
      {/* list hanging below the palette combo box, and the mouse pointer */}
      <div className="absolute top-[47px] left-[142px]">
        <PaletteDropDown />
        <svg width="11" height="16" viewBox="0 0 11 16" className="absolute -top-[11px] left-[153px]">
          <path d="M1 1v12l3-2.700L6 15l2.300-1L6.300 9.500H10z" fill="#fff" stroke="#333" strokeWidth=".9" />
        </svg>
      </div>
    </div>
  </div>
);

/* Bars at the bottom */

const StatusBar = () => (
  <div className="flex h-4 shrink-0 items-center bg-linear-to-b from-[#dcdee4] to-[#bcbfc7] pl-[5px] text-[#54575f]">
    <span className="grow tracking-[-0.1px]">Nothing</span>
    <span className="mr-4 border-l border-[#aaaeb8] pl-[6px] text-[#3f4248]">100%</span>
    <Svg size={11} box={11}><circle cx="5.500" cy="5.500" r="4.700" fill="#eee" stroke="#666" /><path d="M3 5.500h5" stroke="#333" /></Svg>
    <span className="mx-[5px] flex h-full w-[62px] items-center justify-center bg-[linear-gradient(transparent_7px,#8e95a5_7px,#8e95a5_8px,transparent_8px)]">
      <svg width="6" height="9" viewBox="0 0 6 9"><path d="M.5.500h5v5.500L3 8.500.500 6z" fill="#f6e18d" stroke="#b89d4d" /></svg>
    </span>
    <Svg size={11} box={11}><circle cx="5.500" cy="5.500" r="4.700" fill="#eee" stroke="#666" /><path d="M3 5.500h5M5.500 3v5" stroke="#333" /></Svg>
    <span className="w-[5px]" />
  </div>
);

const RedCross = () => (
  <>
    <circle cx="8.500" cy="8.500" r="3.300" fill="#cf2f33" />
    <path d="m7 7 3 3M10 7l-3 3" stroke="#fff" />
  </>
);

const TaskBar = () => (
  <div className="flex h-[27px] shrink-0 border-t border-[#4b8794] bg-[#69d2e7] tracking-normal">
    <div className="flex w-[35px] items-center justify-center border-r border-[#4fa6b8] bg-[#86dbec] pr-[2px]">
      <Svg size={18}><path d="M1 3.500 8.500 2v7.500H1zM10 1.800 19 .5v9h-9zM1 11h7.500v7.500L1 17zM10 11h9v8.500L10 18z" fill="#fff" /></Svg>
    </div>
    <div className="flex w-[39px] items-center justify-center border-r border-[#4fa6b8] bg-[#80d9ea]">
      <Svg size={22}><path d="M1 1h8v15H1z" fill="#2878bb" /><path d="M2 3.500h6M2 6h6" stroke="#8ec6ec" /><path d="M6 11h13.500v7.500H6z" fill="#788c9c" stroke="#dde7ec" /><path d="M10 11V8.500h5V11M6 14.500h13" stroke="#dde7ec" /></Svg>
    </div>
    <div className="flex w-[42px] items-center justify-center">
      <Svg size={20}><path d="M4 2h16l-4 16H0z" fill="#2f73b5" stroke="#bddcf0" strokeWidth=".8" /><path d="m6 5 5 5-6 5M10.500 15H15" stroke="#fff" strokeWidth="1.800" /></Svg>
    </div>
    <div className="flex w-[41px] items-center justify-center">
      <Svg size={22}><path d="M1 3h7l2 2h8v12H1z" fill="#e6c35c" stroke="#c9a23b" strokeWidth=".6" /><path d="M1 7h18v9H1z" fill="#f8e39a" /><path d="M4 19v-6q6-3 12 0v6h-3v-4H7v4z" fill="#86bce0" /><path d="M11 2h2v3h-2z" fill="#4e9e4b" /><path d="M14 2.500h2v2h-2z" fill="#c84330" /></Svg>
    </div>
    <div className="flex w-[42px] items-center justify-center border-x border-[#4fa6b8] bg-[#80d9ea]">
      <Svg size={20}>
        <path d="M10 10 1.770 5.250A9.500 9.500 0 0 1 18.230 5.250z" fill="#dc4437" />
        <path d="M10 10V19.500A9.500 9.500 0 0 1 1.770 5.250z" fill="#1da160" />
        <path d="M10 10 18.230 5.250A9.500 9.500 0 0 1 10 19.500z" fill="#fecd40" />
        <circle cx="10" cy="10" r="4.600" fill="#fff" /><circle cx="10" cy="10" r="3.600" fill="#4588f1" />
      </Svg>
    </div>
    <div className="flex w-[41px] items-center justify-center border-r border-[#4fa6b8] bg-[#a5e5f0]">
      <Svg size={22}><path d="m14 14 4.500 4.500" stroke="#52ab3b" strokeWidth="3" /><circle cx="9.800" cy="9.800" r="9" fill="#5cb543" /><text x="5.800" y="13.700" fontSize="11" fontWeight="bold" fontFamily="Liberation Sans, sans-serif" fill="#fff">N</text></Svg>
    </div>
    <span className="grow" />
    <div className="flex items-center font-['Open_Sans',sans-serif] text-[7.800px] text-[#1d3137]">
      <span className="mr-[8px]"><Arrow dir="up" color="#111" /></span>
      <Svg size={12} box={12}><path d="M1.500 1v10" stroke="#444" /><path d="M2 1.500h6v5H2z" fill="#fff" stroke="#555" strokeWidth=".6" /><RedCross /></Svg>
      <span className="w-[4px]" />
      <Svg size={12} box={12}><path d="M3 2h8v6H3z" fill="#78d6e8" stroke="#fff" /><path d="M1 1v6h2M5 10.500h5M7 8v2" stroke="#fff" strokeWidth="1.200" /></Svg>
      <span className="w-[4px]" />
      <Svg size={12} box={12}><path d="M1 4h2l3-3v9L3 7.500H1z" fill="#fff" stroke="#555" strokeWidth=".6" /><RedCross /></Svg>
      <span className="ml-[10px] w-[13px]">ITA</span>
      <div className="mr-[11px] ml-[10px] w-[41px] text-center leading-[11px] whitespace-nowrap"><div>12:01</div><div className="-mx-1">2017-09-04</div></div>
    </div>
  </div>
);

export default function App() {
  return (
    <div className="relative flex h-[720px] w-[1280px] flex-col overflow-hidden bg-[#e7eaf0] font-['Liberation_Sans',sans-serif] text-[7.800px] leading-[10px] tracking-[-0.35px]">
      <div className="relative flex h-[21px] shrink-0 items-center justify-center bg-[#c5d6dd] bg-linear-to-r from-[#bdcfe1] from-5% to-[#c5d6dd] to-8%">
        <div className="absolute top-[4px] left-0 flex items-center">
          <svg width="11" height="12" viewBox="0 0 11 12"><circle cx="5" cy="6" r="5.300" fill="#56b344" /><text x="2.500" y="8.800" fontSize="7.500" fontWeight="bold" fontFamily="Liberation Sans, sans-serif" fill="#fff">N</text></svg>
          <svg width="11" height="11" viewBox="0 0 11 11" className="ml-[11px]"><path d="M.5.500h10v10h-9l-1-1z" fill="#5a4797" /><path d="M2.500 1h6v4h-6z" fill="#f3f1fa" /><path d="M3 7h5v4H3z" fill="#dfdbef" /></svg>
          <svg width="5" height="6" viewBox="0 0 5 6" className="ml-[14px]" fill="#444"><path d="M0 .5h5v1H0zM.5 3h4l-2 2.500z" /></svg>
        </div>
        <span className="font-['Open_Sans',sans-serif] text-[7.800px] tracking-[-0.17px] text-[#23292c]">
          C:\Users\GPR\AppData\Local\Temp\4\6c52659d622f46de9c8a5bb9d137bc5e\6c52659d622f46de9c8a5bb9d137bc5e.npx - Template Editor
        </span>
        <div className="absolute -top-px right-[1px] flex h-[15px] border border-[#8b9ba4]">
          <span className="flex w-[19px] items-center justify-center border-r border-[#8b9ba4]"><i className="mt-[3px] h-[2px] w-[6px] bg-[#222]" /></span>
          <span className="flex w-[17px] items-center justify-center border-r border-[#8b9ba4]">
            <svg width="7" height="7" viewBox="0 0 7 7" fill="none" stroke="#222"><path d="M.7 2.200h4v4h-4zM2.200 2V.7h4.100v4.100H5" strokeWidth="1.200" /></svg>
          </span>
          <span className="flex w-[31px] items-center justify-center"><CloseX /></span>
        </div>
      </div>
      <div className="flex h-[14px] shrink-0 border-b border-[#dcdfe2] bg-[#fcfdfd]">
        <span className="mr-[2px] w-[37px] bg-linear-to-b from-[#fbb32e] to-[#f19a12] text-center leading-[14px] text-[#fff3d0]">File</span>
        <span className="-mb-px w-[67px] border-x border-[#c6cad2] bg-white text-center leading-[15px] text-[#4b4e56]">Report Designer</span>
        <span className="grow" />
        <svg width="7" height="7" viewBox="0 0 7 7" className="mt-[4px] mr-[4px]" fill="none" stroke="#777"><path d="m.5 3 3-2.500L6.500 3M.5 5.500l3-2.500 3 2.500z" strokeWidth=".8" /></svg>
      </div>
      <Ribbon />
      <div className="flex h-[581px] shrink-0">
        <div className="flex w-[140px] flex-col gap-[5px] pt-[3px] pl-[1px]">
          <FieldList />
          <PropertyGrid />
        </div>
        <div className="flex w-[1021px] flex-col gap-[2px] pr-[2px]">
          <Surface />
          <ScriptErrors />
        </div>
        <ToolBox />
      </div>
      <StatusBar />
      <TaskBar />
      <Wizard />
    </div>
  );
}
